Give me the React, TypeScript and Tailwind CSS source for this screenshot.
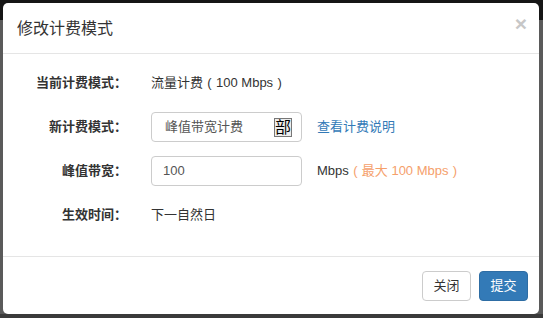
function Paren({ c }: { c: string }) {
  return <span className="inline-block w-[13px] text-center">{c}</span>
}

export default function App() {
  return (
    <div
      className="w-[543px] h-[318px] bg-[#5a5a5a] relative overflow-hidden"
      style={{ fontFamily: '"Liberation Sans", "Noto Sans CJK SC", sans-serif' }}
    >
      <div className="absolute left-0 top-0 w-full h-[20px] bg-[#161616]" />
      <div className="absolute left-0 bottom-0 w-full h-[4px] bg-[#3a3a3a]" />
      {/* modal */}
      <div className="absolute left-[3px] top-[3px] w-[536px] h-[311px] bg-white rounded-[5px] flex flex-col text-[13px] text-[#333]">
        <div className="h-[51px] border-b border-[#e5e5e5] flex items-center justify-between pl-[14px] pr-[12px] pt-[1px]">
          <h4 className="text-[16px] leading-[20px] text-[#333]">修改计费模式</h4>
          <button className="text-[21px] font-bold leading-none text-[#c7c7c7] -mt-[10px]">×</button>
        </div>

        <div className="flex flex-col gap-[14px] pt-[14px] pb-[26px]">
          <div className="flex items-center h-[30px]">
            <div className="w-[133px] pr-[9px] text-right font-bold">当前计费模式：</div>
            <div className="pl-[15px]">流量计费<Paren c="(" />100 Mbps<Paren c=")" /></div>
          </div>
          <div className="flex items-center h-[30px]">
            <div className="w-[133px] pr-[9px] text-right font-bold">新计费模式：</div>
            <div className="pl-[15px] flex items-center">
              <div className="w-[151px] h-[30px] border border-[#ccc] rounded-[4px] flex items-center justify-between pl-[13px] pr-[9px] text-[#555]">
                <span>峰值带宽计费</span>
                <span className="w-[18px] h-[19px] border border-[#777] bg-[#ededed] text-[16px] leading-[17px] text-black overflow-hidden whitespace-nowrap">部</span>
              </div>
              <a className="ml-[15px] text-[#337ab7]">查看计费说明</a>
            </div>
          </div>
          <div className="flex items-center h-[30px]">
            <div className="w-[133px] pr-[9px] text-right font-bold">峰值带宽：</div>
            <div className="pl-[15px] flex items-center">
              <div className="w-[151px] h-[30px] border border-[#ccc] rounded-[4px] flex items-center pl-[11px] text-[#555]">100</div>
              <span className="ml-[15px]">Mbps</span>
              <span className="text-[#f5a06b]"><Paren c="(" />最大 100 Mbps<Paren c=")" /></span>
            </div>
          </div>
          <div className="flex items-center h-[30px]">
            <div className="w-[133px] pr-[9px] text-right font-bold">生效时间：</div>
            <div className="pl-[15px]">下一自然日</div>
          </div>
        </div>

        <div className="border-t border-[#e5e5e5] flex justify-end gap-[8px] pt-[14px] pr-[11px]">
          <button className="w-[49px] h-[30px] border border-[#ccc] rounded-[4px] bg-white text-[#333]">关闭</button>
          <button className="w-[49px] h-[30px] border border-[#2e6da4] rounded-[4px] bg-[#337ab7] text-white">提交</button>
        </div>
      </div>
    </div>
  )
}
